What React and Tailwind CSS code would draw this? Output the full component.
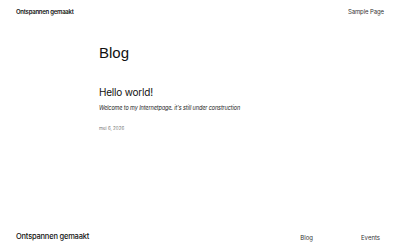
export default function App() {
  return (
    <div className="w-[400px] h-[250px] bg-white flex flex-col text-[#111] font-['Inter',sans-serif] overflow-hidden">
      <header className="h-[23px] px-4 flex items-center justify-between">
        <span className="text-[6px] font-semibold tracking-[-0.25px]">Ontspannen gemaakt</span>
        <nav className="text-[6px] text-[#333] tracking-[-0.1px]">Sample Page</nav>
      </header>
      <main className="flex-1 pl-[99px]">
        <h1 className="mt-[20px] text-[15px] leading-[20px] font-['Liberation_Sans',sans-serif]">Blog</h1>
        <h2 className="mt-[22px] text-[10px] leading-[14px] tracking-[-0.2px]">Hello world!</h2>
        <p className="mt-[5px] text-[5.5px] italic tracking-[-0.1px] text-[#222]">
          Welcome to my Internetpage. it&apos;s still under construction
        </p>
        <p className="mt-[14px] text-[4.5px] text-[#777]">mei 6, 2026</p>
      </main>
      <footer className="h-[26px] px-4 flex items-center justify-between">
        <span className="text-[7.5px] font-medium tracking-[-0.2px]">Ontspannen gemaakt</span>
        <nav className="flex gap-[48px] text-[6px] text-[#333] pr-[4px]">
          <span>Blog</span>
          <span>Events</span>
        </nav>
      </footer>
    </div>
  );
}
